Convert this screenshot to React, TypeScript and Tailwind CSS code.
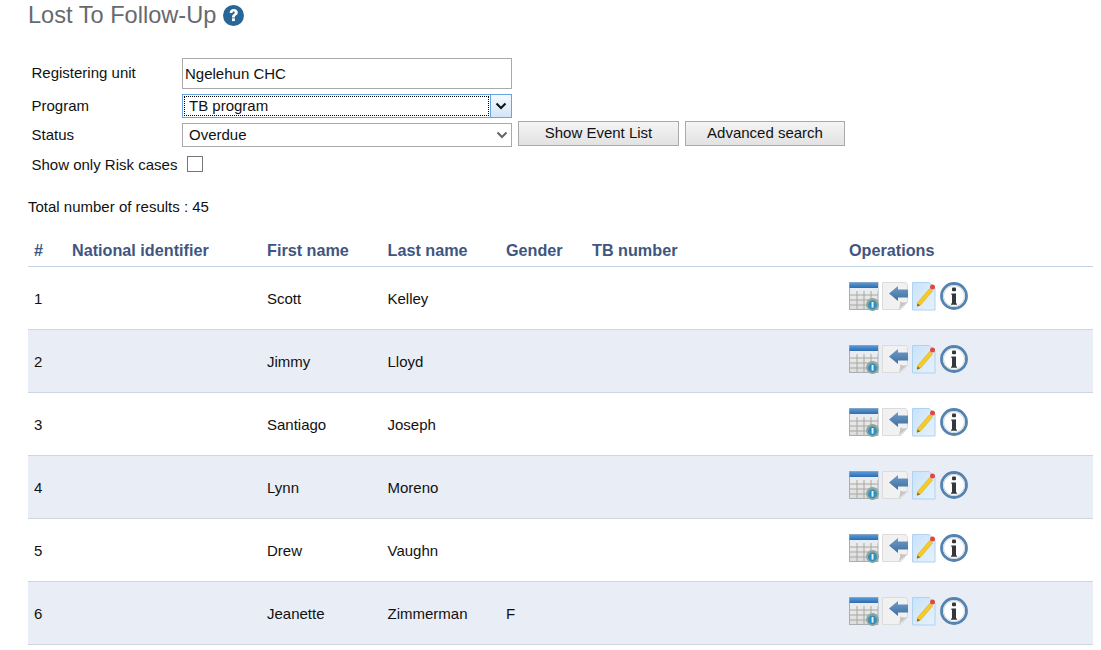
import React from "react";

const rows = [
  ["1", "Scott", "Kelley", ""],
  ["2", "Jimmy", "Lloyd", ""],
  ["3", "Santiago", "Joseph", ""],
  ["4", "Lynn", "Moreno", ""],
  ["5", "Drew", "Vaughn", ""],
  ["6", "Jeanette", "Zimmerman", "F"],
];

const cols = "grid grid-cols-[44px_195px_120.5px_118.5px_86px_257px_1fr]";

function Chevron({ color, width = 2 }: { color: string; width?: number }) {
  return (
    <svg width="12" height="8" viewBox="0 0 12 8" className="block">
      <path d="M1.5 1.5 L6 6 L10.5 1.5" fill="none" stroke={color} strokeWidth={width} />
    </svg>
  );
}

function Ops({ idx }: { idx: number }) {
  const g = `g${idx}`;
  return (
    <div className="flex h-[32px] items-center mt-[-5px] blur-[0.7px]">
      <svg width="30" height="30" viewBox="0 0 30 30" className="block">
        <defs>
          <linearGradient id={`${g}a`} x1="0" x2="0" y1="0" y2="1">
            <stop offset="0" stopColor="#5b9bd8" />
            <stop offset="1" stopColor="#2d6cb0" />
          </linearGradient>
          <linearGradient id={`${g}b`} x1="0" x2="0" y1="0" y2="1">
            <stop offset="0" stopColor="#f4f4f4" />
            <stop offset="1" stopColor="#dcdcdc" />
          </linearGradient>
          <linearGradient id={`${g}c`} x1="0" x2="1" y1="0" y2="1">
            <stop offset="0" stopColor="#c9e2f8" />
            <stop offset="1" stopColor="#e6f2fc" />
          </linearGradient>
          <linearGradient id={`${g}d`} x1="0" x2="0" y1="0" y2="1">
            <stop offset="0" stopColor="#6f9cc9" />
            <stop offset="1" stopColor="#3f6f9f" />
          </linearGradient>
        </defs>
        <rect x="0.5" y="1.5" width="28.5" height="27" fill={`url(#${g}b)`} stroke="#a9aeb2" />
        <rect x="0.5" y="1.5" width="28.5" height="5.5" fill={`url(#${g}a)`} />
        <rect x="1" y="7" width="28" height="3" fill="#e6ecf2" />
        <path d="M1 14H29M1 19H29M1 24H29M8 10V28M15 10V28M22 10V28" stroke="#a6a6a4" strokeWidth="1" fill="none" />
        <circle cx="23.5" cy="23.5" r="6.4" fill="#8ea79c" />
        <circle cx="23.5" cy="24" r="4.4" fill="#2e8fc4" />
        <rect x="22.6" y="21" width="1.9" height="5.6" fill="#e8f2f5" />
      </svg>
      <svg width="27" height="30" viewBox="0 0 27 30" className="block ml-[3px]">
        <path d="M0.5 1.5H24L25.5 4V21L19 28.5H0.5Z" fill="#f1f1f1" stroke="#dcdcdc" />
        <path d="M17 28.5C18 25 18.5 22.5 18 20.5C21 22 23.5 21.5 25.5 21Z" fill="#c6c6c6" />
        <path d="M7 12.5L16 5V8.5H26V16.5H16V20Z" fill={`url(#${g}d)`} />
      </svg>
      <svg width="24" height="30" viewBox="0 0 24 30" className="block ml-[3px]">
        <path d="M0.5 1.5H17L23 7V29H0.5Z" fill={`url(#${g}c)`} stroke="#aed2f0" />
        <path d="M5.6 21.5L17.6 7.6L20.6 10L8.6 24L5 25.4Z" fill="#f4cb2a" stroke="#d5a514" strokeWidth="0.5" />
        <path d="M5 25.4L5.6 22.4L8.2 24.2Z" fill="#7a6630" />
        <circle cx="20.5" cy="6" r="2.5" fill="#e0483e" />
      </svg>
      <svg width="28" height="28" viewBox="0 0 28 28" className="block ml-[4px]">
        <circle cx="14" cy="14" r="12.5" fill="#ffffff" stroke="#5583b0" strokeWidth="2.8" />
        <circle cx="14" cy="14" r="10.5" fill="none" stroke="#cfd6dc" strokeWidth="1" />
        <rect x="12" y="5.5" width="4" height="3.8" rx="1" fill="#33383d" />
        <path d="M11.4 11.5H16V21.5H17V22.8H11V21.5H12V13H11.4Z" fill="#33383d" />
      </svg>
    </div>
  );
}

export default function App() {
  return (
    <div className="w-[1101px] h-[650px] overflow-hidden bg-white pl-[28px] pr-[8px] font-['Liberation_Sans',Arial,sans-serif] text-[15px] text-[#111]">
      <div className="flex items-center h-[32px] gap-[7px] text-[23.6px] text-[#666a6e]">
        <span>Lost To Follow-Up</span>
        <svg width="21" height="21" viewBox="0 0 21 21" className="block mt-[-2px]">
          <circle cx="10.5" cy="10.5" r="10.5" fill="#276696" />
          <path d="M6.6 8C6.7 5.5 8.5 4 10.8 4C13.1 4 14.8 5.5 14.8 7.5C14.8 9.1 13.9 9.9 12.8 10.6C12 11.2 11.9 11.5 11.9 12.4H9C9 10.7 9.5 10 10.6 9.2C11.4 8.6 11.8 8.2 11.8 7.6C11.8 7 11.4 6.5 10.7 6.5C9.9 6.5 9.4 7.1 9.3 8Z" fill="#fff" />
          <rect x="9" y="13.3" width="2.9" height="2.8" fill="#fff" />
        </svg>
      </div>

      <div className="pl-[3.5px] pt-[26px] flex flex-col">
        <div className="flex items-center h-[31px]">
          <span className="w-[150.5px]">Registering unit</span>
          <input
            readOnly
            value="Ngelehun CHC"
            className="w-[330px] h-[31px] border border-[#aaaaaa] px-[2px] bg-white text-[15px] outline-none"
          />
        </div>
        <div className="flex items-center h-[24px] mt-[5px]">
          <span className="w-[150.5px]">Program</span>
          <div className="w-[330px] h-[24px] border border-[#68a4e2] flex items-stretch bg-white">
            <div className="flex-1 m-[1px] border border-dotted border-black pl-[4px] leading-[18px]">TB program</div>
            <div className="w-[21px] border-l border-[#68a4e2] bg-gradient-to-b from-[#f4f9fe] to-[#d3e5f8] flex items-center justify-center">
              <Chevron color="#111111" />
            </div>
          </div>
        </div>
        <div className="flex items-center h-[24px] mt-[5px]">
          <span className="w-[150.5px]">Status</span>
          <div className="w-[330px] h-[24px] border border-[#aaaaaa] flex items-center justify-between pl-[6px] pr-[3px] bg-white">
            <span>Overdue</span>
            <Chevron color="#666666" />
          </div>
          <button className="ml-[6px] mt-[-3px] w-[161px] h-[25px] pb-[2px] border border-[#aaaaaa] bg-gradient-to-b from-[#f4f4f4] to-[#e2e2e2] text-[15px] text-[#111]">
            Show Event List
          </button>
          <button className="ml-[6px] mt-[-3px] w-[160px] h-[25px] pb-[2px] border border-[#aaaaaa] bg-gradient-to-b from-[#f4f4f4] to-[#e2e2e2] text-[15px] text-[#111]">
            Advanced search
          </button>
        </div>
        <div className="flex items-center h-[18px] mt-[8px]">
          <span className="w-[155.5px] pt-[2px]">Show only Risk cases</span>
          <div className="w-[16px] h-[16px] border border-[#767676] bg-white" />
        </div>
      </div>

      <div className="mt-[25px] h-[18px] leading-[18px]">Total number of results : 45</div>

      <div className="mt-[20px]">
        <div className={`${cols} h-[31px] border-b border-[#c4d5e8] items-center font-bold text-[16.2px] text-[#3f5680] pb-[1px]`}>
          <span className="pl-[6px]">#</span>
          <span>National identifier</span>
          <span>First name</span>
          <span>Last name</span>
          <span>Gender</span>
          <span>TB number</span>
          <span>Operations</span>
        </div>
        {rows.map((r, i) => (
          <div
            key={r[0]}
            className={`${cols} h-[63px] border-b border-[#cdd5e0] items-center ${i % 2 === 1 ? "bg-[#e9eef6]" : "bg-white"}`}
          >
            <span className="pl-[6px] pt-[2px]">{r[0]}</span>
            <span />
            <span className="pt-[2px]">{r[1]}</span>
            <span className="pt-[2px]">{r[2]}</span>
            <span className="pt-[2px]">{r[3]}</span>
            <span />
            <Ops idx={i} />
          </div>
        ))}
      </div>
    </div>
  );
}
